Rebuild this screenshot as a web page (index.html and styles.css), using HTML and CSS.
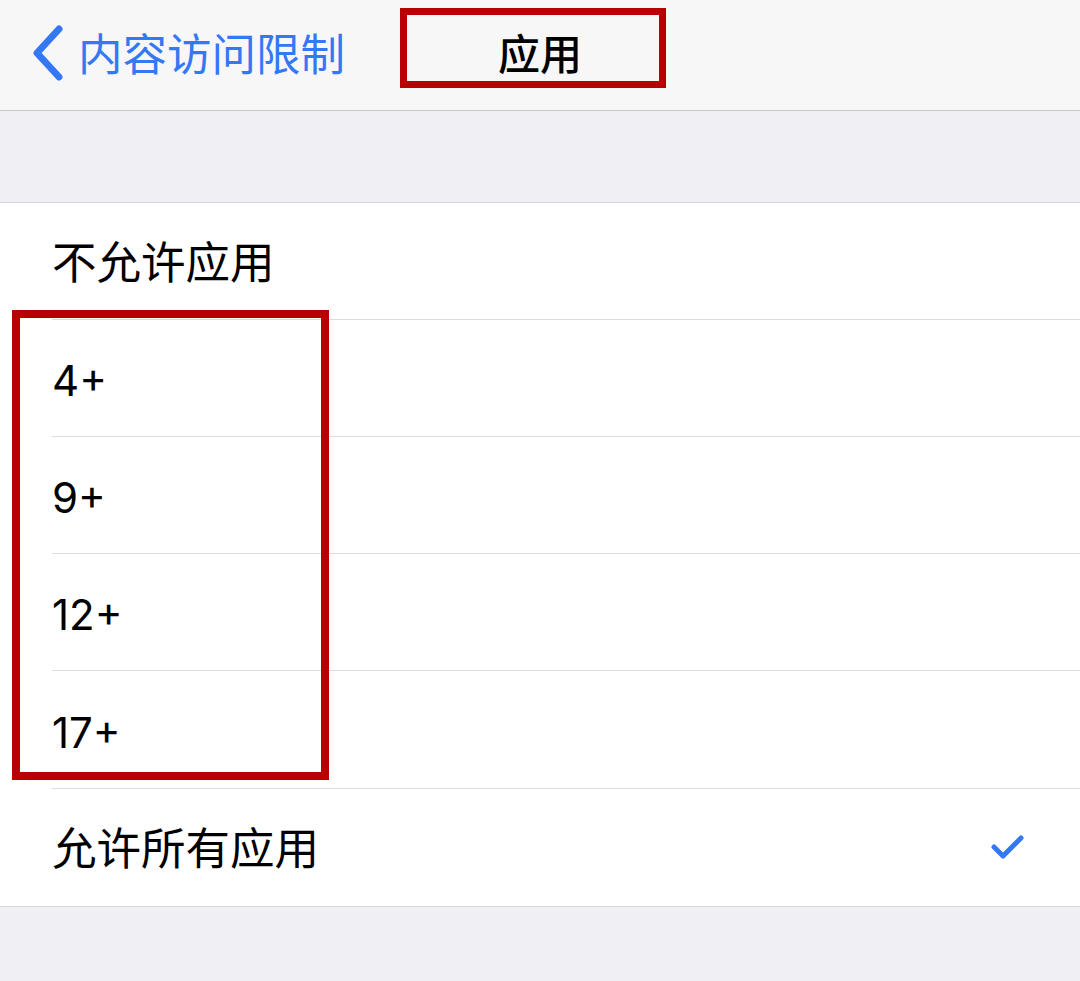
FILE: index.html
```html
<!DOCTYPE html>
<html lang="zh">
<head>
<meta charset="utf-8">
<link rel="stylesheet" href="styles.css">
</head>
<body>
<div class="screen">
  <header class="navbar">
    <div class="back">
      <svg class="chev" width="36" height="56" viewBox="0 0 36 56"><polyline points="29,4 7,28 29,52" fill="none" stroke="#3478f6" stroke-width="7" stroke-linecap="round" stroke-linejoin="round"/></svg>
      <span class="back-label">内容访问限制</span>
    </div>
    <div class="title">应用</div>
    <div class="mark mark-title"></div>
  </header>
  <div class="gap"></div>
  <section class="list">
    <div class="row"><div class="cell">不允许应用</div></div>
    <div class="row"><div class="cell num">4+</div></div>
    <div class="row"><div class="cell num">9+</div></div>
    <div class="row"><div class="cell num">12+</div></div>
    <div class="row"><div class="cell num tall">17+</div></div>
    <div class="row"><div class="cell last">允许所有应用
      <svg class="check" width="36" height="30" viewBox="0 0 36 30"><polyline points="4,15 13,24 31,6" fill="none" stroke="#3478f6" stroke-width="5" stroke-linecap="round" stroke-linejoin="round"/></svg>
    </div></div>
    <div class="mark mark-list"></div>
  </section>
  <div class="footer"></div>
</div>
</body>
</html>
```
FILE: styles.css
```css
* { box-sizing: border-box; }
html, body { margin: 0; padding: 0; }
body {
  width: 1080px;
  height: 981px;
  overflow: hidden;
  background: #efeff4;
  font-family: "Inter", "Noto Sans CJK SC", sans-serif;
  color: #000;
}
.screen { position: relative; width: 1080px; height: 981px; }
.navbar {
  position: relative;
  height: 111px;
  background: #f7f7f8;
  border-bottom: 1px solid #c9c9cc;
  display: flex;
  align-items: center;
}
.back {
  display: flex;
  align-items: center;
  padding-left: 30px;
  gap: 12px;
  height: 100%;
}
.chev { display: block; margin-top: -4px; }
.back-label {
  font-family: "Noto Sans CJK SC", sans-serif;
  font-size: 44.5px;
  line-height: 1;
  color: #3478f6;
  margin-top: -6px;
}
.title {
  position: absolute;
  left: 0; right: 0; top: 0; bottom: 0;
  display: flex;
  justify-content: center;
  align-items: center;
  font-family: "Noto Sans CJK SC", sans-serif;
  font-weight: 500;
  font-size: 42px;
  line-height: 1;
  margin-top: -6px;
  pointer-events: none;
}
.gap { height: 92px; border-bottom: 1px solid #d6d6da; }
.list {
  position: relative;
  background: #fff;
  border-bottom: 1px solid #d6d6da;
}
.row { padding-left: 52px; }
.cell {
  height: 117px;
  border-bottom: 1px solid #dcdcdf;
  display: flex;
  align-items: center;
  font-size: 44.5px;
  line-height: 1;
  padding-bottom: 2px;
}
.cell.tall { height: 118px; }
.cell.last { border-bottom: none; height: 117px; justify-content: space-between; font-family: "Noto Sans CJK SC", sans-serif; padding-right: 54px; }
.row:first-child .cell { font-family: "Noto Sans CJK SC", sans-serif; }
.num { font-size: 42px; padding-bottom: 0; padding-top: 6px; }
.check { display: block; }
.mark {
  position: absolute;
  border: 8px solid #b80002;
}
.mark-title { left: 400px; top: 8px; width: 266px; height: 80px; border-width: 7px; }
.mark-list { left: 12px; top: 107px; width: 317px; height: 470px; }
.footer { height: 76px; }
```
